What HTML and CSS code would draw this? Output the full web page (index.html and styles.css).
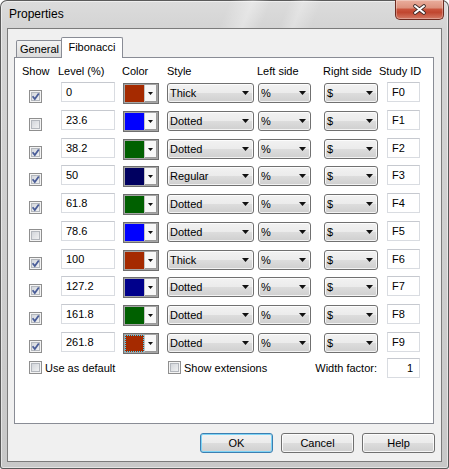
FILE: index.html
```html
<!DOCTYPE html>
<html>
<head>
<meta charset="utf-8">
<link rel="stylesheet" href="styles.css">
</head>
<body>
<div class="window">
  <div class="titlebar">
    <span class="title">Properties</span>
    <span class="close"><svg width="13" height="11" viewBox="0 0 13 11"><path d="M2 2L11 9M11 2L2 9" stroke="#3a2a28" stroke-width="3.6" stroke-linecap="round" fill="none"/><path d="M2 2L11 9M11 2L2 9" stroke="#fff" stroke-width="2" stroke-linecap="round" fill="none"/></svg></span>
  </div>
  <div class="client">
    <div class="tabs">
      <div class="tab general">General</div>
      <div class="tab active">Fibonacci</div>
    </div>
    <div class="panel">
      <div class="cols head">
        <span>Show</span><span>Level (%)</span><span>Color</span><span>Style</span><span>Left side</span><span>Right side</span><span>Study ID</span>
      </div>
      <div class="rows">
        <div class="cols row">
          <span class="cb"><svg class="tick" width="11" height="11" viewBox="0 0 11 11"><path d="M2.6 5.2L4.8 8L8.8 2.4"/></svg></span>
          <span class="txt level">0</span>
          <span class="ccombo"><span class="swatch" style="background:#a52a00"></span><span class="cbtn"><svg width="5" height="3" viewBox="0 0 5 3"><path d="M0 0h5L2.5 3z"/></svg></span></span>
          <span class="combo style"><span>Thick</span><svg width="7" height="4" viewBox="0 0 7 4"><path d="M0 0h7L3.5 4z"/></svg></span>
          <span class="combo lside"><span>%</span><svg width="7" height="4" viewBox="0 0 7 4"><path d="M0 0h7L3.5 4z"/></svg></span>
          <span class="combo rside"><span>$</span><svg width="7" height="4" viewBox="0 0 7 4"><path d="M0 0h7L3.5 4z"/></svg></span>
          <span class="txt sid">F0</span>
        </div>
        <div class="cols row">
          <span class="cb"></span>
          <span class="txt level">23.6</span>
          <span class="ccombo"><span class="swatch" style="background:#0000ff"></span><span class="cbtn"><svg width="5" height="3" viewBox="0 0 5 3"><path d="M0 0h5L2.5 3z"/></svg></span></span>
          <span class="combo style"><span>Dotted</span><svg width="7" height="4" viewBox="0 0 7 4"><path d="M0 0h7L3.5 4z"/></svg></span>
          <span class="combo lside"><span>%</span><svg width="7" height="4" viewBox="0 0 7 4"><path d="M0 0h7L3.5 4z"/></svg></span>
          <span class="combo rside"><span>$</span><svg width="7" height="4" viewBox="0 0 7 4"><path d="M0 0h7L3.5 4z"/></svg></span>
          <span class="txt sid">F1</span>
        </div>
        <div class="cols row">
          <span class="cb"><svg class="tick" width="11" height="11" viewBox="0 0 11 11"><path d="M2.6 5.2L4.8 8L8.8 2.4"/></svg></span>
          <span class="txt level">38.2</span>
          <span class="ccombo"><span class="swatch" style="background:#006000"></span><span class="cbtn"><svg width="5" height="3" viewBox="0 0 5 3"><path d="M0 0h5L2.5 3z"/></svg></span></span>
          <span class="combo style"><span>Dotted</span><svg width="7" height="4" viewBox="0 0 7 4"><path d="M0 0h7L3.5 4z"/></svg></span>
          <span class="combo lside"><span>%</span><svg width="7" height="4" viewBox="0 0 7 4"><path d="M0 0h7L3.5 4z"/></svg></span>
          <span class="combo rside"><span>$</span><svg width="7" height="4" viewBox="0 0 7 4"><path d="M0 0h7L3.5 4z"/></svg></span>
          <span class="txt sid">F2</span>
        </div>
        <div class="cols row">
          <span class="cb"><svg class="tick" width="11" height="11" viewBox="0 0 11 11"><path d="M2.6 5.2L4.8 8L8.8 2.4"/></svg></span>
          <span class="txt level">50</span>
          <span class="ccombo"><span class="swatch" style="background:#000060"></span><span class="cbtn"><svg width="5" height="3" viewBox="0 0 5 3"><path d="M0 0h5L2.5 3z"/></svg></span></span>
          <span class="combo style"><span>Regular</span><svg width="7" height="4" viewBox="0 0 7 4"><path d="M0 0h7L3.5 4z"/></svg></span>
          <span class="combo lside"><span>%</span><svg width="7" height="4" viewBox="0 0 7 4"><path d="M0 0h7L3.5 4z"/></svg></span>
          <span class="combo rside"><span>$</span><svg width="7" height="4" viewBox="0 0 7 4"><path d="M0 0h7L3.5 4z"/></svg></span>
          <span class="txt sid">F3</span>
        </div>
        <div class="cols row">
          <span class="cb"><svg class="tick" width="11" height="11" viewBox="0 0 11 11"><path d="M2.6 5.2L4.8 8L8.8 2.4"/></svg></span>
          <span class="txt level">61.8</span>
          <span class="ccombo"><span class="swatch" style="background:#006000"></span><span class="cbtn"><svg width="5" height="3" viewBox="0 0 5 3"><path d="M0 0h5L2.5 3z"/></svg></span></span>
          <span class="combo style"><span>Dotted</span><svg width="7" height="4" viewBox="0 0 7 4"><path d="M0 0h7L3.5 4z"/></svg></span>
          <span class="combo lside"><span>%</span><svg width="7" height="4" viewBox="0 0 7 4"><path d="M0 0h7L3.5 4z"/></svg></span>
          <span class="combo rside"><span>$</span><svg width="7" height="4" viewBox="0 0 7 4"><path d="M0 0h7L3.5 4z"/></svg></span>
          <span class="txt sid">F4</span>
        </div>
        <div class="cols row">
          <span class="cb"></span>
          <span class="txt level">78.6</span>
          <span class="ccombo"><span class="swatch" style="background:#0000ff"></span><span class="cbtn"><svg width="5" height="3" viewBox="0 0 5 3"><path d="M0 0h5L2.5 3z"/></svg></span></span>
          <span class="combo style"><span>Dotted</span><svg width="7" height="4" viewBox="0 0 7 4"><path d="M0 0h7L3.5 4z"/></svg></span>
          <span class="combo lside"><span>%</span><svg width="7" height="4" viewBox="0 0 7 4"><path d="M0 0h7L3.5 4z"/></svg></span>
          <span class="combo rside"><span>$</span><svg width="7" height="4" viewBox="0 0 7 4"><path d="M0 0h7L3.5 4z"/></svg></span>
          <span class="txt sid">F5</span>
        </div>
        <div class="cols row">
          <span class="cb"><svg class="tick" width="11" height="11" viewBox="0 0 11 11"><path d="M2.6 5.2L4.8 8L8.8 2.4"/></svg></span>
          <span class="txt level">100</span>
          <span class="ccombo"><span class="swatch" style="background:#a52a00"></span><span class="cbtn"><svg width="5" height="3" viewBox="0 0 5 3"><path d="M0 0h5L2.5 3z"/></svg></span></span>
          <span class="combo style"><span>Thick</span><svg width="7" height="4" viewBox="0 0 7 4"><path d="M0 0h7L3.5 4z"/></svg></span>
          <span class="combo lside"><span>%</span><svg width="7" height="4" viewBox="0 0 7 4"><path d="M0 0h7L3.5 4z"/></svg></span>
          <span class="combo rside"><span>$</span><svg width="7" height="4" viewBox="0 0 7 4"><path d="M0 0h7L3.5 4z"/></svg></span>
          <span class="txt sid">F6</span>
        </div>
        <div class="cols row">
          <span class="cb"><svg class="tick" width="11" height="11" viewBox="0 0 11 11"><path d="M2.6 5.2L4.8 8L8.8 2.4"/></svg></span>
          <span class="txt level">127.2</span>
          <span class="ccombo"><span class="swatch" style="background:#00008b"></span><span class="cbtn"><svg width="5" height="3" viewBox="0 0 5 3"><path d="M0 0h5L2.5 3z"/></svg></span></span>
          <span class="combo style"><span>Dotted</span><svg width="7" height="4" viewBox="0 0 7 4"><path d="M0 0h7L3.5 4z"/></svg></span>
          <span class="combo lside"><span>%</span><svg width="7" height="4" viewBox="0 0 7 4"><path d="M0 0h7L3.5 4z"/></svg></span>
          <span class="combo rside"><span>$</span><svg width="7" height="4" viewBox="0 0 7 4"><path d="M0 0h7L3.5 4z"/></svg></span>
          <span class="txt sid">F7</span>
        </div>
        <div class="cols row">
          <span class="cb"><svg class="tick" width="11" height="11" viewBox="0 0 11 11"><path d="M2.6 5.2L4.8 8L8.8 2.4"/></svg></span>
          <span class="txt level">161.8</span>
          <span class="ccombo"><span class="swatch" style="background:#006000"></span><span class="cbtn"><svg width="5" height="3" viewBox="0 0 5 3"><path d="M0 0h5L2.5 3z"/></svg></span></span>
          <span class="combo style"><span>Dotted</span><svg width="7" height="4" viewBox="0 0 7 4"><path d="M0 0h7L3.5 4z"/></svg></span>
          <span class="combo lside"><span>%</span><svg width="7" height="4" viewBox="0 0 7 4"><path d="M0 0h7L3.5 4z"/></svg></span>
          <span class="combo rside"><span>$</span><svg width="7" height="4" viewBox="0 0 7 4"><path d="M0 0h7L3.5 4z"/></svg></span>
          <span class="txt sid">F8</span>
        </div>
        <div class="cols row">
          <span class="cb"><svg class="tick" width="11" height="11" viewBox="0 0 11 11"><path d="M2.6 5.2L4.8 8L8.8 2.4"/></svg></span>
          <span class="txt level">261.8</span>
          <span class="ccombo"><span class="swatch focus" style="background:#a52a00"></span><span class="cbtn"><svg width="5" height="3" viewBox="0 0 5 3"><path d="M0 0h5L2.5 3z"/></svg></span></span>
          <span class="combo style"><span>Dotted</span><svg width="7" height="4" viewBox="0 0 7 4"><path d="M0 0h7L3.5 4z"/></svg></span>
          <span class="combo lside"><span>%</span><svg width="7" height="4" viewBox="0 0 7 4"><path d="M0 0h7L3.5 4z"/></svg></span>
          <span class="combo rside"><span>$</span><svg width="7" height="4" viewBox="0 0 7 4"><path d="M0 0h7L3.5 4z"/></svg></span>
          <span class="txt sid">F9</span>
        </div>
      </div>
      <div class="cols bottom">
        <label class="opt opt-default"><span class="cb"></span><span>Use as default</span></label>
        <label class="opt opt-ext"><span class="cb"></span><span>Show extensions</span></label>
        <span class="wf-label">Width factor:</span>
        <span class="txt sid wf">1</span>
      </div>
    </div>
    <div class="buttons">
      <span class="btn default">OK</span>
      <span class="btn">Cancel</span>
      <span class="btn">Help</span>
    </div>
  </div>
</div>
</body>
</html>
```

FILE: styles.css
```css
* { box-sizing: border-box; }
html, body { margin: 0; padding: 0; background: #fff; }
body {
  font-family: "Liberation Sans", Arial, sans-serif;
  font-size: 11px;
  color: #000;
}
.window {
  width: 449px;
  height: 469px;
  display: flex;
  flex-direction: column;
  border-radius: 7px 7px 3px 3px;
  overflow: hidden;
  background: linear-gradient(180deg, #dcdcdc 0, #d4d4d4 28px, #c8c8c8 100%);
  box-shadow: inset 0 0 0 1px #5a5a5a, inset 0 0 0 2px rgba(255,255,255,0.5);
}
.titlebar {
  height: 28px;
  flex: none;
  display: flex;
  justify-content: space-between;
  align-items: flex-start;
  padding-left: 9px;
  background: linear-gradient(112deg, rgba(255,255,255,0) 50%, rgba(255,255,255,0.35) 55%, rgba(255,255,255,0) 59%, rgba(255,255,255,0) 63%, rgba(255,255,255,0.28) 66%, rgba(255,255,255,0) 70%);
}
.title {
  font-size: 12px;
  line-height: 14px;
  margin-top: 7px;
  color: #000;
}
.close {
  width: 49px;
  height: 20px;
  margin-right: 5px;
  border: 1px solid #6e2b20;
  border-top: none;
  border-radius: 0 0 5px 5px;
  background: linear-gradient(180deg, #eaae9d 0, #dd927e 40%, #c9533c 50%, #c0462f 65%, #d47a65 100%);
  box-shadow: inset 0 0 0 1px rgba(255,255,255,0.3);
  display: flex;
  align-items: center;
  justify-content: center;
}
.client {
  flex: 1;
  margin: 0 7px 7px 7px;
  background: #f0f0f0;
  border: 1px solid #7b7b7b;
  padding: 8px 7px 0 6px;
  display: flex;
  flex-direction: column;
}
.tabs {
  display: flex;
  align-items: flex-end;
  height: 20px;
  margin-left: 2px;
  position: relative;
  z-index: 1;
  flex: none;
}
.tab {
  height: 17px;
  border: 1px solid #898c95;
  border-bottom: none;
  border-radius: 2px 2px 0 0;
  background: linear-gradient(180deg, #f3f3f3, #dcdcdc);
  display: flex;
  align-items: center;
  justify-content: center;
}
.tab.general { width: 47px; }
.tab.active {
  width: 62px;
  height: 21px;
  margin-left: -2px;
  margin-bottom: -1px;
  padding-bottom: 2px;
  background: #fff;
}
.panel {
  flex: none;
  width: 420px;
  height: 367px;
  border: 1px solid #898c95;
  background: #fff;
  padding: 7px 0 0 7px;
}
.cols {
  display: grid;
  grid-template-columns: 36px 64px 45px 90px 66px 56px 1fr;
  align-items: start;
}
.head {
  height: 13px;
  line-height: 13px;
  margin-bottom: 4px;
  white-space: nowrap;
}
.rows {
  display: flex;
  flex-direction: column;
  gap: 6.78px;
}
.row { height: 21px; }
.cb {
  width: 13px;
  height: 13px;
  border: 1px solid #8f8f8f;
  background: linear-gradient(135deg, #cbcfd5, #f8f8f8);
  box-shadow: inset 0 0 0 1px #f4f4f4, inset 0 0 0 2px #b3b7bd;
  display: block;
  flex: none;
}
.row .cb { margin: 8px 0 0 7px; }
.tick {
  display: block;
  fill: none;
  stroke: #4a5d98;
  stroke-width: 1.8;
}
.txt {
  height: 20px;
  background: #fff;
  border: 1px solid #d9dce1;
  border-top-color: #c6c9cf;
  padding: 0 4px;
  display: flex;
  align-items: center;
  white-space: nowrap;
}
.level { margin-left: 3px; width: 54px; }
.sid { margin-left: 8px; width: 33px; }
.ccombo {
  margin: 1px 0 0 1px;
  width: 36px;
  height: 21px;
  border: 1px solid #6f6f6f;
  box-shadow: inset 0 0 0 1px #a5a5a5;
  padding: 1px;
  display: flex;
}
.swatch { width: 19px; height: 100%; flex: none; }
.swatch.focus { outline: 1px dotted #3fd6ff; outline-offset: -1px; }
.cbtn {
  flex: 1;
  background: #f8f8f8;
  border-left: 1px solid #c4c4c4;
  box-shadow: inset -1px -1px 0 #9a9a9a;
  display: flex;
  align-items: center;
  justify-content: center;
  padding-right: 1px;
}
.cbtn svg, .combo svg { display: block; fill: #111; flex: none; }
.combo {
  margin-top: 1px;
  height: 20px;
  border: 1px solid #707070;
  border-radius: 3px;
  background: linear-gradient(180deg, #f2f2f2 0, #ebebeb 50%, #dddddd 50%, #cfcfcf 100%);
  box-shadow: inset 0 0 0 1px rgba(255,255,255,0.75);
  display: flex;
  align-items: center;
  justify-content: space-between;
  padding: 0 4px 0 2px;
  white-space: nowrap;
}
.style { width: 87px; }
.lside { margin-left: 1px; width: 53px; }
.rside { margin-left: 1px; width: 54px; }
.bottom {
  margin-top: 5px;
  height: 20px;
  align-items: center;
}
.opt {
  display: flex;
  align-items: center;
  gap: 3px;
  white-space: nowrap;
}
.opt-default { grid-column: 1 / 4; grid-row: 1; margin-left: 7px; }
.opt-ext { grid-column: 4 / 5; grid-row: 1; margin-left: 1px; }
.wf-label {
  grid-column: 5 / 7;
  grid-row: 1;
  justify-self: end;
  padding-right: 2px;
  white-space: nowrap;
}
.wf {
  grid-column: 7;
  grid-row: 1;
  justify-content: flex-end;
  padding-right: 6px;
}
.buttons {
  display: flex;
  justify-content: flex-end;
  gap: 8px;
  margin-top: 9px;
  margin-right: -1px;
}
.btn {
  width: 73px;
  height: 20px;
  border: 1px solid #707070;
  border-radius: 3px;
  background: linear-gradient(180deg, #f2f2f2 0, #ebebeb 50%, #dddddd 50%, #cfcfcf 100%);
  box-shadow: inset 0 0 0 1px rgba(255,255,255,0.8);
  display: flex;
  align-items: center;
  justify-content: center;
}
.btn.default {
  border-color: #3c7fb1;
  box-shadow: inset 0 0 0 1px #7fd4f6;
}
```
